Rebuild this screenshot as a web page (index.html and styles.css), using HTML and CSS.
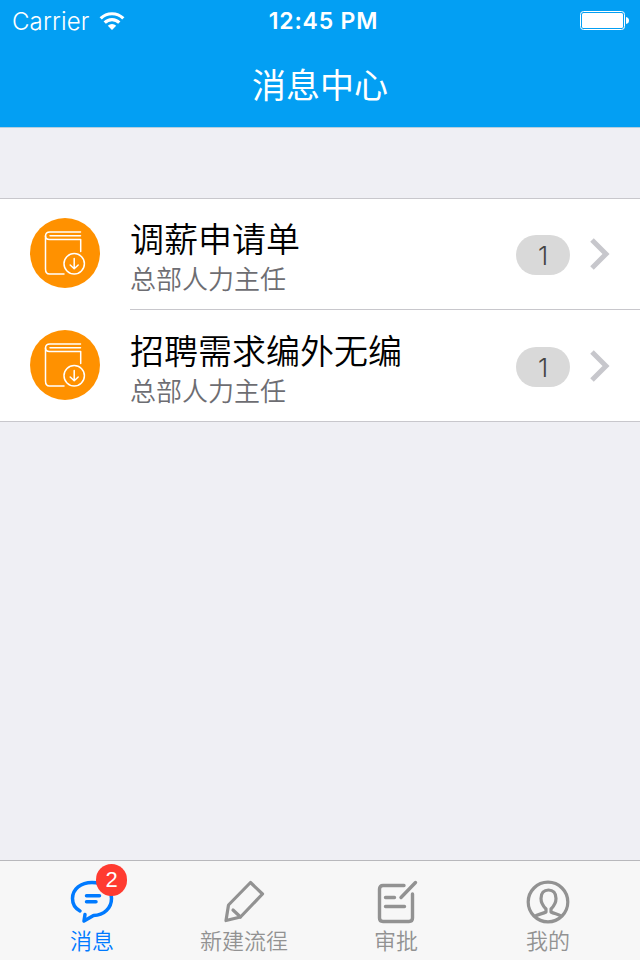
FILE: index.html
```html
<!DOCTYPE html>
<html lang="zh-CN">
<head>
    <meta charset="UTF-8">
    <meta name="viewport" content="width=device-width, initial-scale=1.0">
    <title>消息中心</title>
    <link rel="stylesheet" href="styles.css">
</head>
<body>
    <svg class="symbols" aria-hidden="true">
        <symbol id="book" viewBox="0 0 70 70">
            <g fill="none" stroke="#fff" stroke-width="1.5" stroke-linecap="round" stroke-linejoin="round">
                <path d="M50.500 14H20q-4.500 0-4.500 4v33q0 5 4 5h14.500"/>
                <path d="M15.500 18q0 3.500 4 3.500h31.200V33.500"/>
                <path d="M50.500 17.700H20"/>
                <circle cx="44.200" cy="45.800" r="10.200"/>
                <path d="M44.200 40.500v10M40.200 47l4 3.700 4-3.700"/>
            </g>
        </symbol>
        <symbol id="chevron" viewBox="0 0 20 32">
            <path d="M2 2l14 14L2 30" fill="none" stroke="#c7c7cc" stroke-width="5"/>
        </symbol>
    </svg>

    <div class="app">
        <header class="header">
            <div class="status-bar">
                <div class="status-left">
                    <span class="carrier">Carrier</span>
                    <svg class="wifi" width="26" height="18" viewBox="0 0 26 18">
                        <g fill="none" stroke="#fff" stroke-width="3.200">
                            <path d="M1.700 6.400a16 16 0 0 1 22.600 0"/>
                            <path d="M5.700 10.700a10.300 10.300 0 0 1 14.600 0"/>
                        </g>
                        <path d="M8.800 13.800a6 6 0 0 1 8.400 0L13 18z" fill="#fff"/>
                    </svg>
                </div>
                <span class="time">12:45 PM</span>
                <div class="status-right">
                    <svg width="50" height="20" viewBox="0 0 50 20">
                        <rect x="0.500" y="0.500" width="44" height="18" rx="3" fill="none" stroke="#fff"/>
                        <rect x="2" y="2" width="41" height="15" rx="1.500" fill="#fff"/>
                        <path d="M46 6q3 .500 3 3.500t-3 3.500z" fill="#fff"/>
                    </svg>
                </div>
            </div>
            <h1 class="title">消息中心</h1>
        </header>

        <main class="content">
            <ul class="list">
                <li class="row">
                    <span class="row-icon"><svg width="70" height="70"><use href="#book"/></svg></span>
                    <div class="row-body">
                        <div class="row-text">
                            <div class="row-title">调薪申请单</div>
                            <div class="row-subtitle">总部人力主任</div>
                        </div>
                        <span class="count">1</span>
                        <svg class="chevron" width="20" height="32"><use href="#chevron"/></svg>
                    </div>
                </li>
                <li class="row">
                    <span class="row-icon"><svg width="70" height="70"><use href="#book"/></svg></span>
                    <div class="row-body">
                        <div class="row-text">
                            <div class="row-title">招聘需求编外无编</div>
                            <div class="row-subtitle">总部人力主任</div>
                        </div>
                        <span class="count">1</span>
                        <svg class="chevron" width="20" height="32"><use href="#chevron"/></svg>
                    </div>
                </li>
            </ul>
        </main>

        <nav class="tab-bar">
            <a class="tab active">
                <span class="tab-icon">
                    <svg width="48" height="48" viewBox="0 0 48 48" fill="none" stroke="currentColor" stroke-width="3.500" stroke-linecap="round" stroke-linejoin="round">
                        <path d="M12 37C6.500 34 4.500 29 4.500 24.500 4.500 15 13 8.500 24 8.500s19.500 6.500 19.500 16S36 41.500 25.500 41.500L16 47l1-6.500"/>
                        <path d="M18.500 21.700h13M18.500 27.700h9.500"/>
                    </svg>
                    <span class="badge">2</span>
                </span>
                <span class="tab-label">消息</span>
            </a>
            <a class="tab">
                <span class="tab-icon">
                    <svg width="48" height="48" viewBox="0 0 48 48" fill="none" stroke="currentColor" stroke-width="3.200" stroke-linecap="round" stroke-linejoin="round">
                        <path d="M30.500 8.500L42.500 20 20.500 43 6 46.500 8.500 31z"/>
                        <path d="M13 36l7.500 7"/>
                    </svg>
                </span>
                <span class="tab-label">新建流徎</span>
            </a>
            <a class="tab">
                <span class="tab-icon">
                    <svg width="48" height="48" viewBox="0 0 48 48" fill="none" stroke="currentColor" stroke-width="3.400" stroke-linecap="round" stroke-linejoin="round">
                        <path d="M32 11.500H11q-3.500 0-3.500 3.500v29q0 3.500 3.500 3.500h26q3.500 0 3.500-3.500V20"/>
                        <path d="M43.500 8.500L29 23.500M13.500 23.500h9M13.500 32.500h19"/>
                    </svg>
                </span>
                <span class="tab-label">审批</span>
            </a>
            <a class="tab">
                <span class="tab-icon">
                    <svg width="48" height="48" viewBox="0 0 48 48" fill="none" stroke="currentColor" stroke-width="3.200" stroke-linejoin="round">
                        <circle cx="24" cy="28" r="19.800"/>
                        <path d="M10.500 42.500c3-2.500 8-2.500 11.500-4.500v-3c-3-3-5-6-5-10.500 0-5.500 3-8.500 7.500-8.500s7.500 3 7.500 8.500c0 4.500-2 7.500-5 10.500v3c3.500 2 8 2 10.500 4.500"/>
                    </svg>
                </span>
                <span class="tab-label">我的</span>
            </a>
        </nav>
    </div>
</body>
</html>
```

FILE: styles.css
```css
* {
    box-sizing: border-box;
}

body {
    margin: 0;
    font-family: Inter, "Noto Sans CJK SC", sans-serif;
    background: #efeff4;
}

.symbols {
    display: none;
}

svg {
    display: block;
    overflow: visible;
}

.app {
    display: flex;
    flex-direction: column;
    height: 960px;
}

/* Header */
.header {
    height: 128px;
    background: #039ff3;
    border-bottom: 1px solid #b5cfdf;
    color: white;
}

.status-bar {
    display: grid;
    grid-template-columns: 1fr auto 1fr;
    align-items: center;
    height: 42px;
    padding: 0 10px 0 12px;
}

.status-left {
    display: flex;
    align-items: center;
    gap: 9px;
}

.carrier {
    font-size: 24px;
    font-weight: 300;
    letter-spacing: 0.15px;
}

.time {
    padding-left: 5px;
    font-size: 23px;
    font-weight: 600;
    letter-spacing: 0.8px;
}

.status-right {
    justify-self: end;
}

.title {
    margin: 0;
    font-family: "Noto Sans CJK SC", sans-serif;
    font-size: 34px;
    font-weight: 400;
    line-height: 83px;
    text-align: center;
}

/* Message list */
.content {
    flex: 1;
    padding-top: 70px;
}

.list {
    margin: 0;
    padding: 0;
    list-style: none;
    background: white;
    border-top: 1px solid #c8c7cc;
    border-bottom: 1px solid #c8c7cc;
}

.row {
    display: flex;
    height: 110px;
    padding-left: 30px;
}

.row-icon {
    width: 70px;
    height: 70px;
    margin: 19px 30px 0 0;
    border-radius: 50%;
    background: #ff9100;
}

.row-body {
    display: flex;
    flex: 1;
    align-items: center;
    padding-right: 30px;
}

.row + .row {
    height: 112px;
}

.row + .row .row-icon {
    margin-top: 21px;
}

.row + .row .row-body {
    border-top: 1px solid #c8c7cc;
}

.row-text {
    flex: 1;
    padding-top: 5px;
    font-family: "Noto Sans CJK SC", sans-serif;
}

.row + .row .row-text {
    padding-top: 6px;
}

.row-title {
    font-size: 34px;
    font-weight: 350;
    line-height: 42px;
    color: black;
}

.row-subtitle {
    font-size: 26px;
    font-weight: 350;
    line-height: 38px;
    color: #6d6d72;
}

.count {
    width: 54px;
    height: 40px;
    margin: 2px 20px 0 0;
    border-radius: 20px;
    background: #d9d9d9;
    color: #444;
    font-size: 26px;
    font-weight: 300;
    line-height: 42px;
    text-align: center;
}

/* Tab bar */
.tab-bar {
    display: flex;
    justify-content: space-between;
    height: 100px;
    padding: 0 16px;
    background: #f7f7f7;
    border-top: 1px solid #b8b8bc;
}

.tab {
    display: flex;
    flex-direction: column;
    align-items: center;
    width: 152px;
    padding-top: 13px;
    color: #929292;
}

.tab.active {
    color: #007aff;
}

.tab-icon {
    position: relative;
}

.tab-label {
    font-family: "Noto Sans CJK SC", sans-serif;
    font-size: 22px;
    font-weight: 350;
    line-height: 34px;
}

.badge {
    position: absolute;
    top: -10px;
    left: 28px;
    width: 31px;
    height: 32px;
    border-radius: 16px;
    background: #ff3b30;
    color: white;
    font-family: "Liberation Sans", sans-serif;
    font-size: 22px;
    line-height: 32px;
    text-align: center;
}
```
